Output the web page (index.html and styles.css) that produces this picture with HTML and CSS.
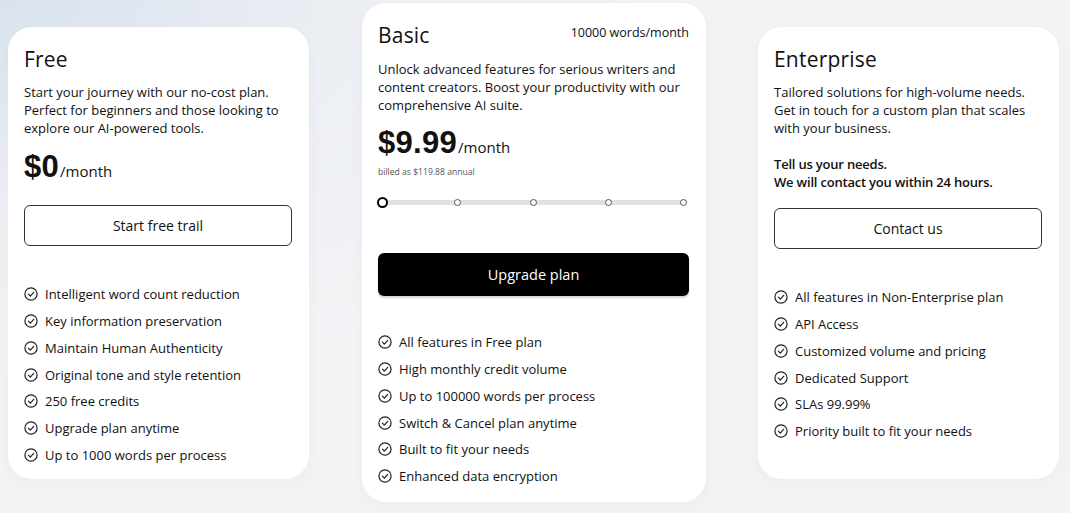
FILE: index.html
```html
<!DOCTYPE html>
<html lang="en">
<head>
<meta charset="utf-8">
<title>Pricing</title>
<link rel="stylesheet" href="styles.css">
</head>
<body>
<main class="plans">
  <section class="card card-free">
    <h2 class="title">Free</h2>
    <p class="desc">Start your journey with our no-cost plan. Perfect for beginners and those looking to explore our AI-powered tools.</p>
    <div class="price"><span class="amount">$0</span><span class="per">/month</span></div>
    <button class="btn btn-outline btn-free">Start free trail</button>
    <ul class="features">
      <li><svg class="check" viewBox="0 0 14 14"><circle cx="7" cy="7" r="6.1"/><path d="M4.4 7.2 6.3 9.1 9.7 5.3"/></svg>Intelligent word count reduction</li>
      <li><svg class="check" viewBox="0 0 14 14"><circle cx="7" cy="7" r="6.1"/><path d="M4.4 7.2 6.3 9.1 9.7 5.3"/></svg>Key information preservation</li>
      <li><svg class="check" viewBox="0 0 14 14"><circle cx="7" cy="7" r="6.1"/><path d="M4.4 7.2 6.3 9.1 9.7 5.3"/></svg>Maintain Human Authenticity</li>
      <li><svg class="check" viewBox="0 0 14 14"><circle cx="7" cy="7" r="6.1"/><path d="M4.4 7.2 6.3 9.1 9.7 5.3"/></svg>Original tone and style retention</li>
      <li><svg class="check" viewBox="0 0 14 14"><circle cx="7" cy="7" r="6.1"/><path d="M4.4 7.2 6.3 9.1 9.7 5.3"/></svg>250 free credits</li>
      <li><svg class="check" viewBox="0 0 14 14"><circle cx="7" cy="7" r="6.1"/><path d="M4.4 7.2 6.3 9.1 9.7 5.3"/></svg>Upgrade plan anytime</li>
      <li><svg class="check" viewBox="0 0 14 14"><circle cx="7" cy="7" r="6.1"/><path d="M4.4 7.2 6.3 9.1 9.7 5.3"/></svg>Up to 1000 words per process</li>
    </ul>
  </section>

  <section class="card card-basic">
    <div class="head">
      <h2 class="title">Basic</h2>
      <span class="quota">10000 words/month</span>
    </div>
    <p class="desc">Unlock advanced features for serious writers and content creators. Boost your productivity with our comprehensive AI suite.</p>
    <div class="price price-basic"><span class="amount">$9.99</span><span class="per">/month</span></div>
    <p class="billed">billed as $119.88 annual</p>
    <div class="slider">
      <span class="stop stop-active"></span>
      <span class="stop"></span>
      <span class="stop"></span>
      <span class="stop"></span>
      <span class="stop"></span>
    </div>
    <button class="btn btn-solid">Upgrade plan</button>
    <ul class="features features-basic">
      <li><svg class="check" viewBox="0 0 14 14"><circle cx="7" cy="7" r="6.1"/><path d="M4.4 7.2 6.3 9.1 9.7 5.3"/></svg>All features in Free plan</li>
      <li><svg class="check" viewBox="0 0 14 14"><circle cx="7" cy="7" r="6.1"/><path d="M4.4 7.2 6.3 9.1 9.7 5.3"/></svg>High monthly credit volume</li>
      <li><svg class="check" viewBox="0 0 14 14"><circle cx="7" cy="7" r="6.1"/><path d="M4.4 7.2 6.3 9.1 9.7 5.3"/></svg>Up to 100000 words per process</li>
      <li><svg class="check" viewBox="0 0 14 14"><circle cx="7" cy="7" r="6.1"/><path d="M4.4 7.2 6.3 9.1 9.7 5.3"/></svg>Switch &amp; Cancel plan anytime</li>
      <li><svg class="check" viewBox="0 0 14 14"><circle cx="7" cy="7" r="6.1"/><path d="M4.4 7.2 6.3 9.1 9.7 5.3"/></svg>Built to fit your needs</li>
      <li><svg class="check" viewBox="0 0 14 14"><circle cx="7" cy="7" r="6.1"/><path d="M4.4 7.2 6.3 9.1 9.7 5.3"/></svg>Enhanced data encryption</li>
    </ul>
  </section>

  <section class="card card-ent">
    <h2 class="title">Enterprise</h2>
    <p class="desc">Tailored solutions for high-volume needs. Get in touch for a custom plan that scales with your business.</p>
    <p class="contact">Tell us your needs.<br>We will contact you within 24 hours.</p>
    <button class="btn btn-outline btn-ent">Contact us</button>
    <ul class="features features-ent">
      <li><svg class="check" viewBox="0 0 14 14"><circle cx="7" cy="7" r="6.1"/><path d="M4.4 7.2 6.3 9.1 9.7 5.3"/></svg>All features in Non-Enterprise plan</li>
      <li><svg class="check" viewBox="0 0 14 14"><circle cx="7" cy="7" r="6.1"/><path d="M4.4 7.2 6.3 9.1 9.7 5.3"/></svg>API Access</li>
      <li><svg class="check" viewBox="0 0 14 14"><circle cx="7" cy="7" r="6.1"/><path d="M4.4 7.2 6.3 9.1 9.7 5.3"/></svg>Customized volume and pricing</li>
      <li><svg class="check" viewBox="0 0 14 14"><circle cx="7" cy="7" r="6.1"/><path d="M4.4 7.2 6.3 9.1 9.7 5.3"/></svg>Dedicated Support</li>
      <li><svg class="check" viewBox="0 0 14 14"><circle cx="7" cy="7" r="6.1"/><path d="M4.4 7.2 6.3 9.1 9.7 5.3"/></svg>SLAs 99.99%</li>
      <li><svg class="check" viewBox="0 0 14 14"><circle cx="7" cy="7" r="6.1"/><path d="M4.4 7.2 6.3 9.1 9.7 5.3"/></svg>Priority built to fit your needs</li>
    </ul>
  </section>
</main>
</body>
</html>
```

FILE: styles.css
```css
* { box-sizing: border-box; }

html, body {
  margin: 0;
  height: 100%;
}

body {
  font-family: "Open Sans", "Noto Sans", sans-serif;
  color: #111;
  background:
    radial-gradient(ellipse 700px 380px at 0 0, #d9e2ee 0%, rgba(232,236,242,0.6) 50%, rgba(242,243,245,0) 100%),
    #f2f3f5;
  overflow: hidden;
}

.plans {
  display: flex;
  align-items: flex-start;
  gap: 53px;
  padding: 3px 0 0 8px;
}

.card {
  background: #fff;
  border-radius: 24px;
  padding: 20px 16px 10px;
  box-shadow: 0 6px 14px rgba(40, 50, 70, 0.03);
}

.card-free, .card-ent {
  width: 301px;
  height: 452px;
  margin-top: 24px;
}

.card-ent { margin-left: -1px; }

.card-basic {
  width: 344px;
  height: 499px;
}

.title {
  margin: 0;
  font-size: 21px;
  line-height: 24px;
  font-weight: 400;
  letter-spacing: 0.2px;
}

.head {
  display: flex;
  justify-content: space-between;
  align-items: center;
}

.quota {
  font-size: 12.5px;
  line-height: 24px;
  margin-top: -4px;
  margin-right: 1px;
}

.desc {
  margin: 12px 0 0;
  font-size: 13px;
  line-height: 18px;
}

.card-basic .desc { margin-top: 13px; }

.price {
  margin-top: 15px;
  display: flex;
  align-items: baseline;
  line-height: 30px;
  height: 30px;
}

.price-basic { margin-top: 14px; }

.amount {
  font-family: "Liberation Sans", Arial, sans-serif;
  font-weight: 700;
  font-size: 31px;
  letter-spacing: 0.3px;
}

.per {
  font-size: 15px;
  margin-left: 1px;
}

.billed {
  margin: 9px 0 0;
  font-size: 8.6px;
  line-height: 10px;
  color: #555;
}

.slider {
  margin: 19px 0 0 -1px;
  height: 12px;
  width: 312px;
  display: flex;
  justify-content: space-between;
  align-items: center;
  background: linear-gradient(#e1e1e1, #e1e1e1) no-repeat 6px 50% / calc(100% - 11px) 5px;
}

.stop {
  width: 11px;
  height: 11px;
  display: flex;
  align-items: center;
  justify-content: center;
}

.stop::before {
  content: "";
  width: 7px;
  height: 7px;
  border-radius: 50%;
  border: 1.3px solid #555;
  background: #fff;
  box-sizing: border-box;
}

.stop-active::before {
  width: 11px;
  height: 11px;
  border: 2px solid #000;
}

.btn {
  display: block;
  width: 100%;
  font-family: inherit;
  font-size: 14px;
  border-radius: 6px;
  cursor: pointer;
}

.btn-outline {
  width: 268px;
  height: 41px;
  margin-top: 23px;
  background: #fff;
  color: #111;
  border: 1px solid #333;
}

.btn-ent {
  height: 41px;
  margin-top: 17px;
}

.btn-solid {
  margin-top: 45px;
  width: 311px;
  height: 43px;
  background: #000;
  color: #fff;
  border: none;
  font-size: 14.5px;
  box-shadow: 0 2px 2px rgba(0,0,0,0.18);
}

.contact {
  margin: 18px 0 0;
  font-size: 13px;
  line-height: 18px;
  font-weight: 600;
  letter-spacing: -0.2px;
}

.features {
  list-style: none;
  margin: 35px 0 0;
  padding: 0;
}

.features-basic { margin-top: 33px; }
.features-ent { margin-top: 35px; }

.features li {
  display: flex;
  align-items: center;
  height: 26.75px;
  font-size: 13px;
}

.check {
  width: 14px;
  height: 14px;
  margin-right: 7px;
  flex: none;
  fill: none;
  stroke: #222;
  stroke-width: 1.2;
  stroke-linecap: round;
  stroke-linejoin: round;
}
```
